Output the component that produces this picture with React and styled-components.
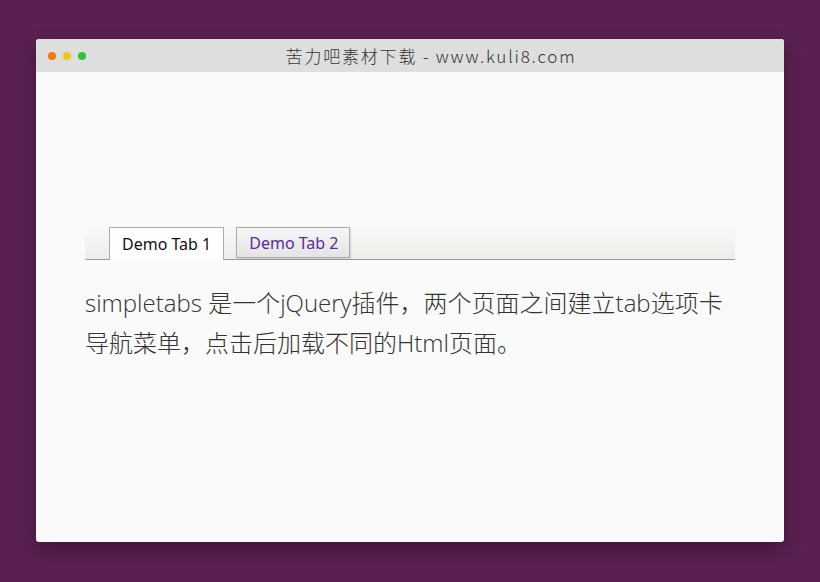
import React from "react";
import styled, { createGlobalStyle } from "styled-components";

const Global = createGlobalStyle`
  html, body { margin: 0; padding: 0; }
  body {
    background: #5a2150;
    width: 820px;
    height: 582px;
    overflow: hidden;
    font-family: "Noto Sans", "Noto Sans CJK SC", sans-serif;
  }
`;

const Page = styled.div`
  padding-top: 39px;
  display: flex;
  justify-content: center;
`;

const Window = styled.div`
  width: 748px;
  height: 503px;
  background: #fafafa;
  border-radius: 3px;
  overflow: hidden;
  box-shadow: 0 8px 18px rgba(40, 8, 35, 0.45);
  display: flex;
  flex-direction: column;
`;

const TitleBar = styled.div`
  height: 33px;
  background: #dedede;
  display: flex;
  align-items: center;
  padding-left: 12px;
`;

const Dots = styled.div`
  display: flex;
  gap: 7px;
`;

const Dot = styled.span`
  width: 8px;
  height: 8px;
  border-radius: 50%;
  background: ${(p) => p.$c};
`;

const Title = styled.div`
  flex: 1;
  text-align: center;
  padding-right: 8px;
  font-family: "Noto Sans CJK SC", sans-serif;
  font-size: 17px;
  font-weight: 300;
  color: #333;
  letter-spacing: 1.8px;
`;

const Content = styled.div`
  padding: 155px 49px 0 49px;
`;

const TabBar = styled.div`
  height: 32px;
  border-bottom: 1px solid #999;
  background: linear-gradient(to bottom, #fafafa 0%, #f5f4f2 40%, #eeece9 100%);
  display: flex;
  align-items: flex-end;
  gap: 12px;
  padding-left: 24px;
`;

const Tab = styled.div`
  box-sizing: border-box;
  padding: 0 ${(p) => (p.$active ? "12px" : "10px")} 0 12px;
  display: flex;
  align-items: center;
  border: 1px solid #aaa;
  border-bottom: ${(p) => (p.$active ? "none" : "1px solid #aaa")};
  margin-bottom: ${(p) => (p.$active ? "-1px" : "1px")};
  height: ${(p) => (p.$active ? "33px" : "31px")};
  background: ${(p) =>
    p.$active ? "#fff" : "linear-gradient(to bottom, #f6f6f6, #e4e4e4)"};
  box-shadow: ${(p) => (p.$active ? "none" : "1px 1px 2px rgba(0,0,0,0.12)")};
  color: ${(p) => (p.$active ? "#111" : "#5b2a9b")};
  font-family: "Noto Sans", sans-serif;
  font-size: 16px;
  cursor: pointer;
`;

const Text = styled.p`
  margin: 23px 0 0 0;
  font-family: "Open Sans", "Noto Sans CJK SC", sans-serif;
  font-weight: 300;
  font-size: 24px;
  line-height: 40px;
  color: #333;
`;

export default function App() {
  return (
    <>
      <Global />
      <Page>
        <Window>
          <TitleBar>
            <Dots>
              <Dot $c="#f97a0c" />
              <Dot $c="#f1c21a" />
              <Dot $c="#2ec43b" />
            </Dots>
            <Title>苦力吧素材下载 - www.kuli8.com</Title>
          </TitleBar>
          <Content>
            <TabBar>
              <Tab $active>Demo Tab 1</Tab>
              <Tab>Demo Tab 2</Tab>
            </TabBar>
            <Text>
              simpletabs 是一个jQuery插件，两个页面之间建立tab选项卡导航菜单，点击后加载不同的Html页面。
            </Text>
          </Content>
        </Window>
      </Page>
    </>
  );
}
